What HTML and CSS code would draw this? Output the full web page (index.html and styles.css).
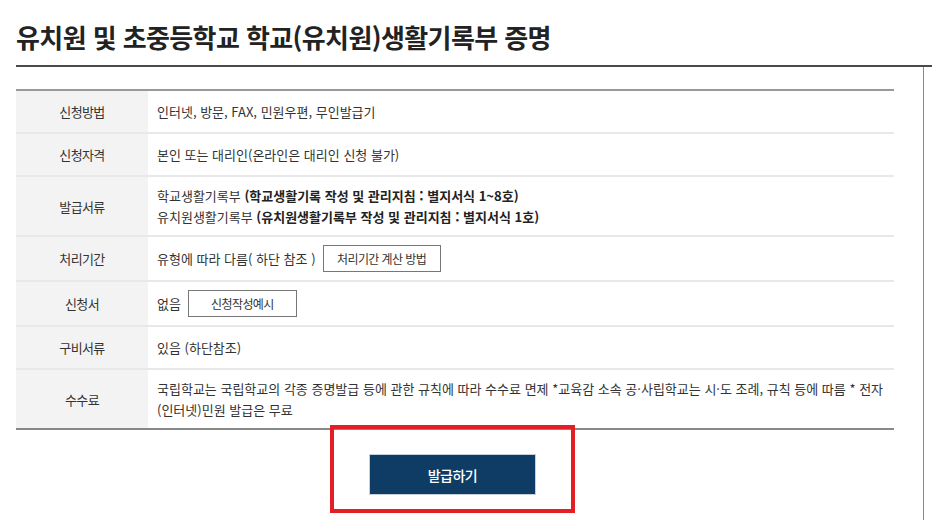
FILE: index.html
```html
<!DOCTYPE html>
<html lang="ko">
<head>
<meta charset="utf-8">
<title>학교생활기록부 증명</title>
<link rel="stylesheet" href="styles.css">
</head>
<body>
<div class="page">
  <h2 class="title">유치원 및 초중등학교 학교(유치원)생활기록부 증명</h2>
  <div class="content">
    <div class="inner">
      <div class="info">
        <div class="row">
          <div class="th">신청방법</div>
          <div class="td">인터넷, 방문, FAX, 민원우편, 무인발급기</div>
        </div>
        <div class="row">
          <div class="th">신청자격</div>
          <div class="td">본인 또는 대리인(온라인은 대리인 신청 불가)</div>
        </div>
        <div class="row">
          <div class="th">발급서류</div>
          <div class="td">
            <p class="line">학교생활기록부 <strong>(학교생활기록 작성 및 관리지침 : 별지서식 1~8호)</strong></p>
            <p class="line">유치원생활기록부 <strong>(유치원생활기록부 작성 및 관리지침 : 별지서식 1호)</strong></p>
          </div>
        </div>
        <div class="row">
          <div class="th">처리기간</div>
          <div class="td with-btn">유형에 따라 다름( 하단 참조 ) <button class="btn btn-calc" type="button">처리기간 계산 방법</button></div>
        </div>
        <div class="row">
          <div class="th">신청서</div>
          <div class="td with-btn">없음 <button class="btn btn-sample" type="button">신청작성예시</button></div>
        </div>
        <div class="row">
          <div class="th">구비서류</div>
          <div class="td">있음 (하단참조)</div>
        </div>
        <div class="row last">
          <div class="th">수수료</div>
          <div class="td">국립학교는 국립학교의 각종 증명발급 등에 관한 규칙에 따라 수수료 면제 *교육감 소속 공·사립학교는 시·도 조례, 규칙 등에 따름 * 전자(인터넷)민원 발급은 무료</div>
        </div>
      </div>
      <div class="actions">
        <div class="issue-wrap">
          <button class="issue" type="button">발급하기</button>
          <span class="highlight"></span>
        </div>
      </div>
    </div>
  </div>
</div>
</body>
</html>
```

FILE: styles.css
```css
* { box-sizing: border-box; }

html, body {
  margin: 0;
  padding: 0;
  background: #fff;
}

body {
  font-family: "Noto Sans CJK KR", "Noto Sans", sans-serif;
  color: #333;
  overflow: hidden;
  height: 520px;
}

.page {
  padding-top: 20px;
  height: 520px;
}

.title {
  margin: 0 0 11px 16px;
  font-size: 26px;
  line-height: 34px;
  font-weight: 700;
  letter-spacing: -0.6px;
  color: #222;
}

.content {
  margin-left: 16px;
  border-top: 2px solid #4a4a4a;
  height: 455px;
}

.inner {
  width: 908px;
  height: 100%;
  border-right: 1px solid #8a8a8a;
  padding-top: 22px;
}

.info {
  width: 878px;
  border-top: 2px solid #999;
}

.row {
  display: flex;
  min-height: 43px;
  border-bottom: 2px solid #e8e8e8;
}

.row.last {
  border-bottom-color: #888;
  min-height: 60px;
}

.th {
  flex: 0 0 132px;
  background: #f3f3f3;
  display: flex;
  align-items: center;
  justify-content: center;
  font-size: 13px;
  letter-spacing: -0.6px;
  color: #333;
}

.td {
  flex: 1;
  display: flex;
  flex-direction: column;
  justify-content: center;
  padding: 8px 9px;
  font-size: 13px;
  line-height: 21px;
  letter-spacing: 0;
  color: #333;
}

.td.with-btn {
  flex-direction: row;
  align-items: center;
  justify-content: flex-start;
  gap: 7px;
}

.line {
  margin: 0;
}

.line strong {
  font-weight: 700;
  color: #222;
}

.btn {
  font-family: inherit;
  font-size: 12px;
  letter-spacing: -0.6px;
  color: #333;
  background: #fff;
  border: 1px solid #777;
  height: 27px;
  line-height: 25px;
  padding: 0;
  cursor: pointer;
}

.btn-sample {
  width: 109px;
}

.btn-calc {
  width: 118px;
}

.actions {
  width: 878px;
  display: flex;
  justify-content: center;
  padding-top: 24px;
  padding-right: 5px;
}

.issue-wrap {
  position: relative;
}

.issue {
  display: block;
  width: 167px;
  height: 41px;
  background: #0f3c64;
  border: 1px solid #c7d0da;
  color: #fff;
  font-family: inherit;
  font-size: 14px;
  font-weight: 500;
  letter-spacing: -0.5px;
  cursor: pointer;
}

.highlight {
  position: absolute;
  left: -39px;
  right: -39px;
  top: -29px;
  bottom: -18px;
  border: 4px solid #e31e24;
  pointer-events: none;
}
```
